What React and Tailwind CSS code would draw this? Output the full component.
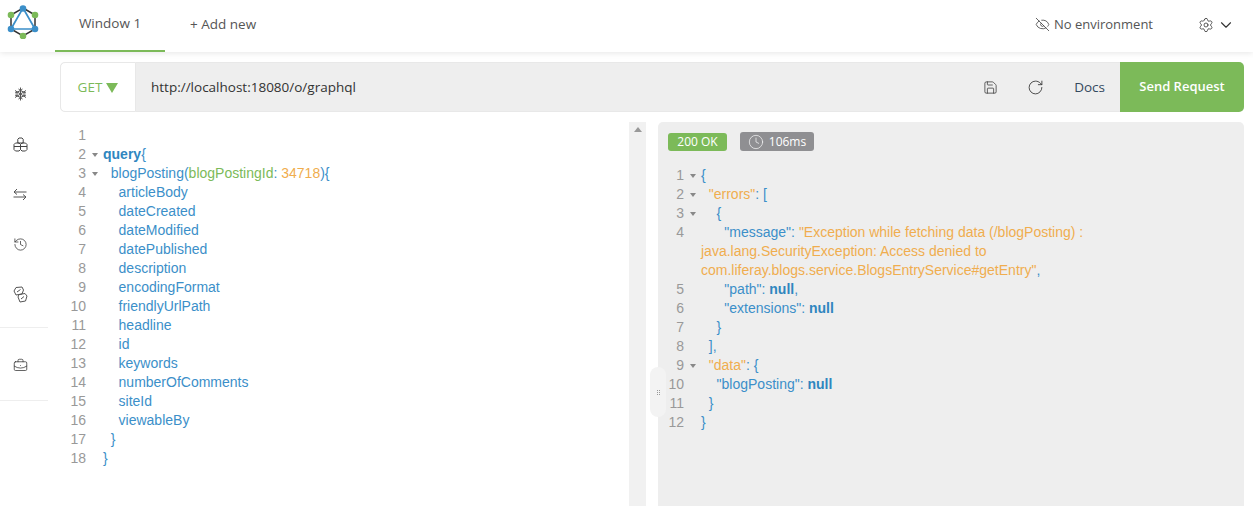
import React from 'react'
import { ChevronDown, Clock, EyeOff, History, RotateCw, Save, Settings, BriefcaseBusiness } from 'lucide-react'

const Logo = () => (
  <svg width="34" height="34" viewBox="0 0 34 34" fill="none">
    <path d="M17 3 L29 10 L29 24 L17 31 L5 24 L5 10 Z" stroke="#333" strokeWidth="1.5" />
    <path d="M17 3 L29 24 L5 24 Z" stroke="#3b8fc9" strokeWidth="1.7" />
    <circle cx="17" cy="3.5" r="3.3" fill="#3b8fc9" />
    <circle cx="5" cy="24" r="3.3" fill="#3b8fc9" />
    <circle cx="29" cy="24" r="3.3" fill="#3b8fc9" />
    <circle cx="5" cy="10" r="3.3" fill="#7cba59" />
    <circle cx="29" cy="10" r="3.3" fill="#7cba59" />
    <circle cx="17" cy="31" r="3.3" fill="#7cba59" />
  </svg>
)

const Flake = () => (
  <svg width="13" height="14" viewBox="0 0 13 14" fill="none" stroke="#555" strokeWidth="1">
    <path d="M6.5 0.5 V13.5 M1 3.5 L12 10.5 M12 3.5 L1 10.5" />
    <path d="M6.5 3.5 L10 5.2 V8.8 L6.5 10.5 L3 8.8 V5.2 Z" />
    <path d="M4.5 2 L6.5 3.5 L8.5 2 M4.5 12 L6.5 10.5 L8.5 12 M1 6 L3 5.2 M12 6 L10 5.2 M1 8 L3 8.8 M12 8 L10 8.8" />
  </svg>
)

const Cubes = () => (
  <svg width="15" height="15" viewBox="0 0 15 15" fill="none" stroke="#444" strokeWidth="1">
    <path d="M4.8 2.2 L6 1 H9 L10.2 2.2 V6 H4.8 Z" />
    <path d="M1 7.5 L2.5 6 H6 L7.5 7.5 V12.5 L6 14 H2.5 L1 12.5 Z" />
    <path d="M7.5 7.5 L9 6 H12.5 L14 7.5 V12.5 L12.5 14 H9 L7.5 12.5" />
    <path d="M1 9.5 H7.5 H14" />
  </svg>
)

const Swap = () => (
  <svg width="14" height="13" viewBox="0 0 14 13" fill="none" stroke="#555" strokeWidth="1">
    <path d="M13.5 4 H1 M4 1 L1 4 L4 6.5" />
    <path d="M0.5 9 H13 M10 6.5 L13 9 L10 12" />
  </svg>
)

const Tickets = () => (
  <svg width="15" height="17" viewBox="0 0 15 17" fill="none" stroke="#555" strokeWidth="1">
    <path d="M1 5 L3 1.5 L9 1 L10.5 4 L9 8 L3 9 Z" />
    <path d="M5 11 L6 8.5 L12 7.5 L14 10 L12.5 15 L7 16 Z" />
    <path d="M4 6 L7.5 3.5 M8 13 L11 10.5" />
  </svg>
)

const SideIcon = ({ children, className }) => (
  <div className={`flex h-[50px] items-center justify-center ${className || ''}`}>{children}</div>
)

const query = [
  [],
  [['text-[#2f86bf] font-bold', 'query'], ['text-[#3b8fc9]', '{']],
  [['text-[#3b8fc9]', '  blogPosting('], ['text-[#7cba59]', 'blogPostingId'], ['text-[#3b8fc9]', ': '], ['text-[#f0ad4e]', '34718'], ['text-[#3b8fc9]', '){']],
  ...['articleBody', 'dateCreated', 'dateModified', 'datePublished', 'description', 'encodingFormat', 'friendlyUrlPath', 'headline', 'id', 'keywords', 'numberOfComments', 'siteId', 'viewableBy'].map((f) => [['text-[#3b8fc9]', '    ' + f]]),
  [['text-[#3b8fc9]', '  }']],
  [['text-[#3b8fc9]', '}']],
]

const blue = 'text-[#3b8fc9]'
const orange = 'text-[#f0ad4e]'
const bold = 'text-[#2f86bf] font-bold'

const response = [
  { no: 1, fold: true, parts: [[blue, '{']] },
  { no: 2, fold: true, parts: [[orange, '  "errors"'], [blue, ': [']] },
  { no: 3, fold: true, parts: [[blue, '    {']] },
  { no: 4, parts: [[blue, '      "message"'], [blue, ': '], [orange, '"Exception while fetching data (/blogPosting) : java.lang.SecurityException: Access denied to com.liferay.blogs.service.BlogsEntryService#getEntry"'], [blue, ',']] },
  { no: 5, parts: [[blue, '      "path": '], [bold, 'null'], [blue, ',']] },
  { no: 6, parts: [[blue, '      "extensions": '], [bold, 'null']] },
  { no: 7, parts: [[blue, '    }']] },
  { no: 8, parts: [[blue, '  ],']] },
  { no: 9, fold: true, parts: [[orange, '  "data"'], [blue, ': {']] },
  { no: 10, parts: [[blue, '    "blogPosting": '], [bold, 'null']] },
  { no: 11, parts: [[blue, '  }']] },
  { no: 12, parts: [[blue, '}']] },
]

const CodeLine = ({ no, fold, parts, numWidth }) => (
  <div className="flex leading-[19px]">
    <div className={`shrink-0 text-right text-[#999] ${numWidth}`}>{no}</div>
    <div className="flex w-[17px] shrink-0 items-center justify-center">
      {fold && <span className="h-0 w-0 border-x-[3px] border-t-[4px] border-x-transparent border-t-[#888]" />}
    </div>
    <div className="min-w-0 flex-1 whitespace-pre-wrap">
      {parts.map(([c, t], i) => (
        <span key={i} className={c}>{t}</span>
      ))}
    </div>
  </div>
)

export default function App() {
  return (
    <div className="h-[506px] w-[1253px] overflow-hidden bg-white font-['Open_Sans',sans-serif] text-[13.5px] text-[#555]">
      <header className="relative flex h-[52px] items-center shadow-[0_1px_6px_rgba(0,0,0,0.1)]">
        <div className="flex w-[55px] justify-center pr-[9px] pb-[9px]">
          <Logo />
        </div>
        <div className="flex h-full w-[110px] items-center justify-center border-b-2 border-[#7cba59] pb-[3px]">Window 1</div>
        <div className="ml-[25px] pb-[3px]">+ Add new</div>
        <div className="ml-auto flex h-full items-center pb-[3px]">
          <EyeOff size={15} strokeWidth={1.2} className="text-[#333]" />
          <span className="ml-[4px] text-[13px]">No environment</span>
          <Settings size={16} strokeWidth={1.2} className="ml-[45px] text-[#333]" />
          <ChevronDown size={18} strokeWidth={1.5} className="mr-[18px] ml-[3px] text-[#333]" />
        </div>
      </header>

      <div className="flex">
        <aside className="flex w-[48px] shrink-0 flex-col pt-[17px] pr-[8px]">
          <SideIcon><Flake /></SideIcon>
          <SideIcon><Cubes /></SideIcon>
          <SideIcon><Swap /></SideIcon>
          <SideIcon><History size={15} strokeWidth={1.2} className="text-[#333]" /></SideIcon>
          <SideIcon><Tickets /></SideIcon>
          <div className="mt-[8px] -mr-[8px] border-t border-[#eee]" />
          <SideIcon className="h-[72px] pt-[2px]"><BriefcaseBusiness size={15} strokeWidth={1.2} className="text-[#333]" /></SideIcon>
          <div className="-mr-[8px] border-t border-[#eee]" />
        </aside>

        <main className="ml-[12px] w-[1184px] pt-[10px]">
          <div className="flex h-[50px] items-stretch rounded-[5px] bg-[#eeeeee]">
            <div className="flex w-[76px] items-center justify-center gap-[4px] rounded-l-[5px] border border-[#e8e8e8] bg-white pt-[1px] text-[#7cba59]">
              GET
              <span className="h-0 w-0 border-x-[6px] border-t-[10px] border-x-transparent border-t-[#7cba59]" />
            </div>
            <div className="flex flex-1 items-center border-y border-[#e8e8e8] pt-[1px] pl-[15px] text-[#333]">http://localhost:18080/o/graphql</div>
            <div className="flex items-center border-y border-[#e8e8e8] pt-[1px] text-[#34495e]">
              <Save size={15} strokeWidth={1.2} className="text-[#333]" />
              <RotateCw size={17} strokeWidth={1.2} className="ml-[29px] text-[#333]" />
              <span className="mr-[15px] ml-[30px]">Docs</span>
            </div>
            <div className="flex w-[124px] items-center justify-center rounded-r-[5px] bg-[#7cba59] text-[13px] font-semibold text-white">Send Request</div>
          </div>

          <div className="relative mt-[10px] flex h-[384px] font-['Liberation_Sans',sans-serif] text-[14px]">
            <div className="w-[569px] shrink-0 pt-[4px]">
              {query.map((parts, i) => (
                <CodeLine key={i} no={i + 1} fold={i === 1 || i === 2} parts={parts} numWidth="w-[26px]" />
              ))}
            </div>
            <div className="flex w-[17px] shrink-0 justify-center bg-[#f1f1f1] pt-[5px]">
              <span className="h-0 w-0 border-x-[4px] border-b-[5px] border-x-transparent border-b-[#999]" />
            </div>
            <div className="ml-[12px] flex-1 rounded-t-[5px] bg-[#eeeeee] pt-[10px] pr-[130px] pl-[10px]">
              <div className="flex items-center gap-[13px] font-['Open_Sans',sans-serif] text-[12px] text-white">
                <span className="flex h-[18px] w-[59px] items-center justify-center rounded-[3px] bg-[#7cba59]">200 OK</span>
                <span className="flex h-[19px] w-[74px] items-center justify-center gap-[5px] rounded-[3px] bg-[#8f8f92]">
                  <Clock size={16} strokeWidth={1} />
                  106ms
                </span>
              </div>
              <div className="mt-[15px]">
                {response.map((l) => (
                  <CodeLine key={l.no} no={l.no} fold={l.fold} parts={l.parts} numWidth="w-[16px]" />
                ))}
              </div>
            </div>
            <div className="absolute top-[245px] left-[590px] flex h-[50px] w-[16px] items-center justify-center rounded-[8px] bg-[#f3f3f3]">
              <span className="grid grid-cols-2 gap-[1px]">
                {[0, 1, 2, 3, 4, 5].map((d) => (
                  <span key={d} className="h-[1px] w-[1px] bg-[#999]" />
                ))}
              </span>
            </div>
          </div>
        </main>
      </div>
    </div>
  )
}
